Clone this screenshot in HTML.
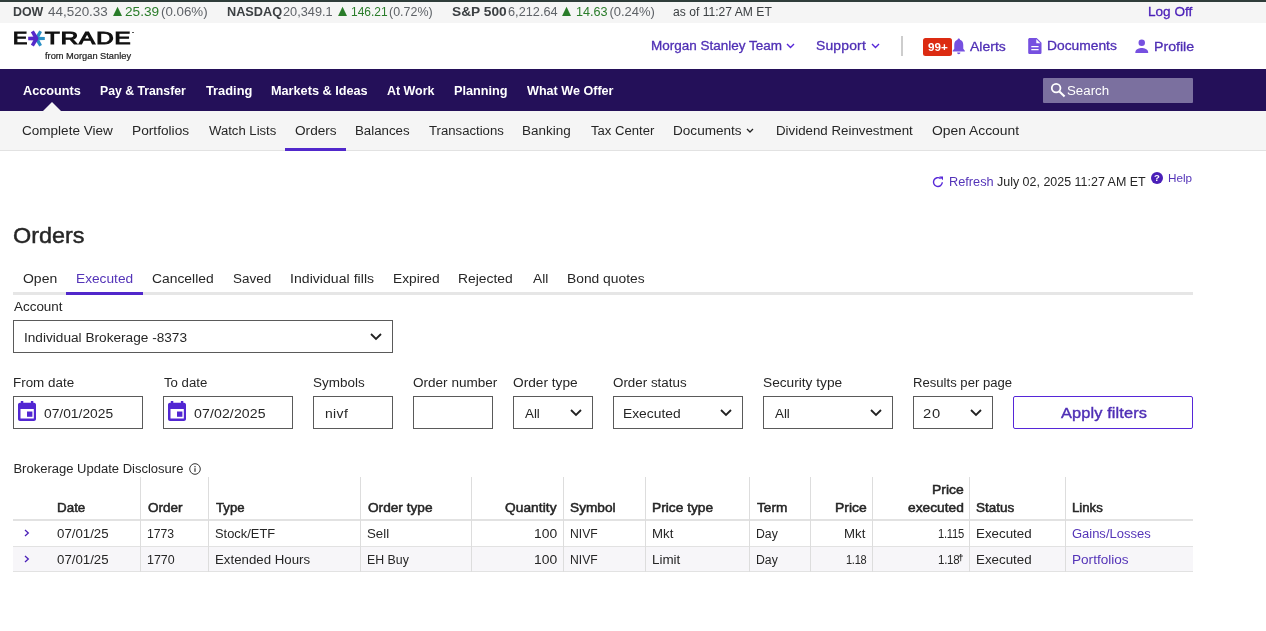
<!DOCTYPE html>
<html lang="en">
<head>
<meta charset="utf-8">
<title>E*TRADE - Orders</title>
<style>
html,body{margin:0;padding:0;}
body{width:1266px;height:631px;position:relative;overflow:hidden;background:#fff;will-change:transform;font-family:"Liberation Sans",sans-serif;}
.t{position:absolute;white-space:nowrap;line-height:20px;height:20px;transform-origin:0 50%;}
.b{position:absolute;box-sizing:border-box;}
.inp{position:absolute;box-sizing:border-box;border:1px solid #5a5a5a;background:#fff;border-radius:0;}
svg{position:absolute;overflow:visible;}
.vl{position:absolute;width:1px;background:#dddddd;top:477px;height:95px;}
</style>
</head>
<body>
<!-- top strip + ticker -->
<div class="b" style="left:0;top:0;width:1266px;height:23px;background:#f5f5f5;"></div>
<div class="b" style="left:0;top:0;width:1266px;height:2px;background:#2f3d3a;"></div>

<!-- logo -->
<svg style="left:27.55px;top:29.8px;" width="17" height="17" viewBox="-8.5 -8.5 17 17">
  <g fill="#2a90c6">
    <polygon points="0,-1.800 8.300,-1.500 8.300,1.500 0,1.800"/>
    <polygon points="0,-1.800 8.300,-1.500 8.300,1.500 0,1.800" transform="rotate(60)"/>
    <polygon points="0,-1.800 8.300,-1.500 8.300,1.500 0,1.800" transform="rotate(-60)"/>
  </g>
  <g fill="#5529c9">
    <polygon points="2.200,0 0,-2 -8.300,-1.700 -8.300,1.700 0,2"/>
    <polygon points="1,0 0,-2 -8.300,-1.700 -8.300,1.700 0,2" transform="rotate(60)"/>
    <polygon points="1,0 0,-2 -8.300,-1.700 -8.300,1.700 0,2" transform="rotate(-60)"/>
  </g>
</svg>

<div class="b" style="left:132.400px;top:31.600px;width:1.600px;height:1.600px;border-radius:50%;background:#444;"></div>
<!-- header icons -->
<svg style="left:786px;top:43px;" width="9" height="6" viewBox="0 0 9 6"><path d="M1 1 L4.5 4.5 L8 1" fill="none" stroke="#5627d8" stroke-width="1.4"/></svg>
<svg style="left:870.5px;top:43px;" width="9" height="6" viewBox="0 0 9 6"><path d="M1 1 L4.5 4.5 L8 1" fill="none" stroke="#5627d8" stroke-width="1.4"/></svg>
<div class="b" style="left:901.3px;top:36px;width:1.7px;height:20px;background:#cdcdcd;"></div>
<!-- bell -->
<svg style="left:951.500px;top:37.500px;" width="13.500" height="17" viewBox="0 0 15 18" preserveAspectRatio="none"><path fill="#7650e0" d="M7.5 0.5c0.9 0 1.4 0.6 1.4 1.4c2.4 0.7 3.6 2.7 3.6 5.3v4.3l1.8 1.9v0.9H0.7v-0.9l1.8-1.9V7.2c0-2.6 1.2-4.6 3.6-5.3C6.1 1.1 6.6 0.5 7.5 0.5z M5.7 15.3h3.6c0 1-0.8 1.8-1.8 1.8s-1.8-0.8-1.8-1.8z"/></svg>
<div class="b" style="left:923px;top:38px;width:29px;height:18px;background:#dc2b12;border-radius:2.500px;"></div>
<!-- document icon -->
<svg style="left:1028px;top:38px;" width="14" height="16" viewBox="0 0 14 16"><path fill="#7650e0" d="M1.8 0h6.9L13.5 4.8V14.4c0 0.9-0.7 1.6-1.6 1.6H1.8C0.9 16 0.2 15.300 0.200 14.400V1.600C0.200 0.700 0.900 0 1.800 0z"/><path fill="#fff" d="M8.300 1.200V5.300h4.100z M3.300 8h7.300v1.300H3.300z M3.300 11h7.300v1.300H3.300z"/></svg>
<!-- profile icon -->
<svg style="left:1135.300px;top:38.800px;" width="13.500" height="14.200" viewBox="0 0 14 15"><circle cx="7" cy="4" r="3.400" fill="#7650e0"/><path fill="#7650e0" d="M0.200 14.200c0-3.400 4.500-4.600 6.800-4.600s6.800 1.200 6.800 4.600v0.600H0.200z"/></svg>

<!-- nav -->
<div class="b" style="left:0;top:69px;width:1266px;height:42px;background:#241059;"></div>
<div class="b" style="left:1043px;top:78px;width:150px;height:25px;background:#7b709f;border-radius:1px;"></div>
<svg style="left:1049.500px;top:82px;" width="16" height="16" viewBox="0 0 17 17"><circle cx="6.500" cy="6.500" r="4.600" fill="none" stroke="#fff" stroke-width="1.900"/><path d="M10 10 L15.500 15.500" stroke="#fff" stroke-width="2.200" fill="none"/></svg>

<!-- subnav -->
<div class="b" style="left:0;top:111px;width:1266px;height:40px;background:#f5f5f5;border-bottom:1px solid #e2e2e2;"></div>
<svg style="left:42.500px;top:102px;" width="18" height="9" viewBox="0 0 18 9"><polygon points="0,9 9,0 18,9" fill="#f5f5f5"/></svg>
<div class="b" style="left:285px;top:147.800px;width:61px;height:3.200px;background:#5128cb;"></div>
<svg style="left:745.800px;top:128.200px;" width="8" height="6" viewBox="0 0 8 6"><path d="M1 1 L4 4 L7 1" fill="none" stroke="#222" stroke-width="1.300"/></svg>

<!-- refresh/help -->
<svg style="left:931.500px;top:176px;" width="12" height="12" viewBox="0 0 12 12"><path d="M10.300 6.200A4.400 4.400 0 1 1 8.600 2.600" fill="none" stroke="#5627d8" stroke-width="1.400"/><polygon points="7.200,0.400 11,0.400 11,4.200" fill="#5627d8"/></svg>
<svg style="left:1151px;top:171.500px;" width="12" height="12" viewBox="0 0 12 12"><circle cx="6" cy="6" r="6" fill="#4a1fb8"/><text x="6" y="9.300" text-anchor="middle" font-family="Liberation Sans, sans-serif" font-size="9.500" font-weight="700" fill="#fff">?</text></svg>

<!-- tabs -->
<div class="b" style="left:13px;top:292px;width:1180px;height:3px;background:#e6e6e6;"></div>
<div class="b" style="left:66px;top:292px;width:77px;height:3px;background:#5128cb;"></div>

<!-- account select -->
<div class="inp" style="left:13px;top:320px;width:380px;height:33px;"></div>
<svg class="chev" style="left:370px;top:333px;" width="12" height="8" viewBox="0 0 12 8"><path d="M1 1 L6 6 L11 1" fill="none" stroke="#222" stroke-width="1.800"/></svg>

<!-- filter inputs -->
<div class="inp" style="left:13px;top:396px;width:130px;height:33px;"></div>
<div class="inp" style="left:163px;top:396px;width:130px;height:33px;"></div>
<div class="inp" style="left:313px;top:396px;width:80px;height:33px;"></div>
<div class="inp" style="left:413px;top:396px;width:80px;height:33px;"></div>
<div class="inp" style="left:513px;top:396px;width:80px;height:33px;"></div>
<div class="inp" style="left:613px;top:396px;width:130px;height:33px;"></div>
<div class="inp" style="left:763px;top:396px;width:130px;height:33px;"></div>
<div class="inp" style="left:913px;top:396px;width:80px;height:33px;"></div>
<div class="inp" style="left:1013px;top:396px;width:180px;height:33px;border-color:#5627d8;border-radius:2px;"></div>
<svg style="left:570px;top:409px;" width="12" height="8" viewBox="0 0 12 8"><path d="M1 1 L6 6 L11 1" fill="none" stroke="#222" stroke-width="1.800"/></svg>
<svg style="left:719.500px;top:409px;" width="12" height="8" viewBox="0 0 12 8"><path d="M1 1 L6 6 L11 1" fill="none" stroke="#222" stroke-width="1.800"/></svg>
<svg style="left:870px;top:409px;" width="12" height="8" viewBox="0 0 12 8"><path d="M1 1 L6 6 L11 1" fill="none" stroke="#222" stroke-width="1.800"/></svg>
<svg style="left:970px;top:409px;" width="12" height="8" viewBox="0 0 12 8"><path d="M1 1 L6 6 L11 1" fill="none" stroke="#222" stroke-width="1.800"/></svg>
<!-- calendar icons -->
<svg style="left:18px;top:401px;" width="18" height="20" viewBox="0 0 18 20"><path fill="#5227d2" d="M2.800 0h2.500v1.700h7.600V0h2.400v1.700h0.700c1.100 0 2 0.900 2 2V18c0 1.100-0.900 2-2 2H2c-1.100 0-2-0.900-2-2V3.700c0-1.100 0.900-2 2-2h0.800z M2.500 8v9.500H15.800V8z"/><rect x="9" y="10.500" width="5.400" height="5.300" fill="#5227d2"/></svg>
<svg style="left:168px;top:401px;" width="18" height="20" viewBox="0 0 18 20"><path fill="#5227d2" d="M2.800 0h2.500v1.700h7.600V0h2.400v1.700h0.700c1.100 0 2 0.900 2 2V18c0 1.100-0.900 2-2 2H2c-1.100 0-2-0.900-2-2V3.700c0-1.100 0.900-2 2-2h0.800z M2.500 8v9.500H15.800V8z"/><rect x="9" y="10.500" width="5.400" height="5.300" fill="#5227d2"/></svg>

<!-- info icon -->
<svg style="left:188.500px;top:462.500px;" width="12" height="12" viewBox="0 0 12 12"><circle cx="6" cy="6" r="5.300" fill="none" stroke="#333" stroke-width="1"/><rect x="5.400" y="5.200" width="1.200" height="3.600" fill="#333"/><rect x="5.400" y="3" width="1.200" height="1.300" fill="#333"/></svg>

<!-- table -->
<div class="b" style="left:13px;top:547px;width:1180px;height:25px;background:#f7f6f9;"></div>
<div class="b" style="left:13px;top:519px;width:1180px;height:2px;background:#e2e2e2;"></div>
<div class="b" style="left:13px;top:546px;width:1180px;height:1px;background:#e2e2e2;"></div>
<div class="b" style="left:13px;top:571px;width:1180px;height:1px;background:#e2e2e2;"></div>
<div class="vl" style="left:140px;"></div>
<div class="vl" style="left:208px;"></div>
<div class="vl" style="left:360px;"></div>
<div class="vl" style="left:471px;"></div>
<div class="vl" style="left:563px;"></div>
<div class="vl" style="left:645px;"></div>
<div class="vl" style="left:749px;"></div>
<div class="vl" style="left:810px;"></div>
<div class="vl" style="left:872px;"></div>
<div class="vl" style="left:969px;"></div>
<div class="vl" style="left:1065px;"></div>
<svg style="left:24px;top:529px;" width="6" height="8" viewBox="0 0 6 8"><path d="M1 1 L4.300 4 L1 7" fill="none" stroke="#4a1fb8" stroke-width="1.300"/></svg>
<svg style="left:24px;top:555px;" width="6" height="8" viewBox="0 0 6 8"><path d="M1 1 L4.300 4 L1 7" fill="none" stroke="#4a1fb8" stroke-width="1.300"/></svg>

<span class="t" style="left:12.88px;top:1.68px;font-size:13.02px;font-weight:700;color:#3c4043;letter-spacing:0.000px;transform:scaleX(0.9530);">DOW</span>
<span class="t" style="left:48.18px;top:2.28px;font-size:13.02px;font-weight:400;color:#5f6368;letter-spacing:0.000px;transform:scaleX(1.0327);">44,520.33</span>
<span class="t" style="left:109.82px;top:1.25px;font-size:16px;font-weight:400;color:#2a7d2a;letter-spacing:-0.300px;transform:scaleX(0.9526);">▲</span>
<span class="t" style="left:125.38px;top:2.28px;font-size:13.02px;font-weight:400;color:#2a7d2a;letter-spacing:0.000px;transform:scaleX(1.0481);">25.39</span>
<span class="t" style="left:161.38px;top:2.28px;font-size:13.02px;font-weight:400;color:#5f6368;letter-spacing:0.000px;transform:scaleX(1.0231);">(0.06%)</span>
<span class="t" style="left:226.88px;top:2.28px;font-size:13.02px;font-weight:700;color:#3c4043;letter-spacing:0.000px;transform:scaleX(0.9773);">NASDAQ</span>
<span class="t" style="left:283.38px;top:2.28px;font-size:13.02px;font-weight:400;color:#5f6368;letter-spacing:0.000px;transform:scaleX(0.9795);">20,349.1</span>
<span class="t" style="left:334.90px;top:1.25px;font-size:16px;font-weight:400;color:#2a7d2a;letter-spacing:-0.300px;transform:scaleX(0.9526);">▲</span>
<span class="t" style="left:350.88px;top:2.28px;font-size:13.02px;font-weight:400;color:#2a7d2a;letter-spacing:-0.007px;transform:scaleX(0.9212);">146.21</span>
<span class="t" style="left:389.38px;top:2.28px;font-size:13.02px;font-weight:400;color:#5f6368;letter-spacing:0.000px;transform:scaleX(0.9574);">(0.72%)</span>
<span class="t" style="left:451.88px;top:1.78px;font-size:13.02px;font-weight:700;color:#3c4043;letter-spacing:0.000px;transform:scaleX(1.0534);">S&amp;P 500</span>
<span class="t" style="left:508.38px;top:2.28px;font-size:13.02px;font-weight:400;color:#5f6368;letter-spacing:0.000px;transform:scaleX(0.9795);">6,212.64</span>
<span class="t" style="left:559.44px;top:1.25px;font-size:16px;font-weight:400;color:#2a7d2a;letter-spacing:-0.300px;transform:scaleX(0.9526);">▲</span>
<span class="t" style="left:575.88px;top:2.28px;font-size:13.02px;font-weight:400;color:#2a7d2a;letter-spacing:0.000px;transform:scaleX(0.9715);">14.63</span>
<span class="t" style="left:609.38px;top:2.28px;font-size:13.02px;font-weight:400;color:#5f6368;letter-spacing:0.000px;">(0.24%)</span>
<span class="t" style="left:673.38px;top:2.28px;font-size:13.02px;font-weight:400;color:#3c4043;letter-spacing:0.000px;transform:scaleX(0.9311);">as of 11:27 AM ET</span>
<span class="t" style="left:1148.38px;top:2.28px;font-size:13.02px;font-weight:400;color:#4a1fb8;letter-spacing:0.000px;transform:scaleX(1.0434);-webkit-text-stroke:0.3px #4a1fb8;">Log Off</span>
<span class="t" style="left:12.84px;top:28.40px;font-size:16.3px;font-weight:400;color:#111;letter-spacing:0.700px;transform:scaleX(1.3149);-webkit-text-stroke:1px #111;">E</span>
<span class="t" style="left:45.22px;top:28.47px;font-size:16.3px;font-weight:400;color:#111;letter-spacing:0.700px;transform:scaleX(1.4751);-webkit-text-stroke:1px #111;">TRADE</span>
<span class="t" style="left:44.68px;top:45.67px;font-size:9px;font-weight:400;color:#222;letter-spacing:0.000px;transform:scaleX(1.0299);-webkit-text-stroke:0.2px #222;">from Morgan Stanley</span>
<span class="t" style="left:651.38px;top:36.39px;font-size:13.02px;font-weight:400;color:#4f2fb5;letter-spacing:0.000px;transform:scaleX(1.0375);-webkit-text-stroke:0.3px #4f2fb5;">Morgan Stanley Team</span>
<span class="t" style="left:816.38px;top:36.39px;font-size:13.02px;font-weight:400;color:#4f2fb5;letter-spacing:0.158px;transform:scaleX(1.0700);-webkit-text-stroke:0.3px #4f2fb5;">Support</span>
<span class="t" style="left:928.18px;top:36.58px;font-size:11px;font-weight:700;color:#fff;letter-spacing:0.000px;transform:scaleX(1.0604);">99+</span>
<span class="t" style="left:969.68px;top:36.81px;font-size:13.02px;font-weight:400;color:#4f2fb5;letter-spacing:0.035px;transform:scaleX(1.0700);-webkit-text-stroke:0.3px #4f2fb5;">Alerts</span>
<span class="t" style="left:1047.38px;top:36.39px;font-size:13.02px;font-weight:400;color:#4f2fb5;letter-spacing:0.000px;transform:scaleX(1.0603);-webkit-text-stroke:0.3px #4f2fb5;">Documents</span>
<span class="t" style="left:1153.88px;top:36.81px;font-size:13.02px;font-weight:400;color:#4f2fb5;letter-spacing:0.000px;transform:scaleX(1.0876);-webkit-text-stroke:0.3px #4f2fb5;">Profile</span>
<span class="t" style="left:23.18px;top:80.72px;font-size:13.02px;font-weight:700;color:#fff;letter-spacing:0.000px;transform:scaleX(0.9745);">Accounts</span>
<span class="t" style="left:99.88px;top:81.42px;font-size:13.02px;font-weight:700;color:#fff;letter-spacing:0.000px;transform:scaleX(0.9412);">Pay &amp; Transfer</span>
<span class="t" style="left:206.18px;top:81.44px;font-size:13.02px;font-weight:700;color:#fff;letter-spacing:0.000px;transform:scaleX(0.9850);">Trading</span>
<span class="t" style="left:270.88px;top:81.42px;font-size:13.02px;font-weight:700;color:#fff;letter-spacing:0.000px;transform:scaleX(0.9747);">Markets &amp; Ideas</span>
<span class="t" style="left:387.18px;top:80.67px;font-size:13.02px;font-weight:700;color:#fff;letter-spacing:0.000px;transform:scaleX(0.9566);">At Work</span>
<span class="t" style="left:453.88px;top:81.39px;font-size:13.02px;font-weight:700;color:#fff;letter-spacing:0.000px;transform:scaleX(0.9756);">Planning</span>
<span class="t" style="left:527.18px;top:80.74px;font-size:13.02px;font-weight:700;color:#fff;letter-spacing:0.000px;transform:scaleX(0.9672);">What We Offer</span>
<span class="t" style="left:1067.38px;top:81.39px;font-size:13.02px;font-weight:400;color:#fff;letter-spacing:0.000px;transform:scaleX(1.0221);">Search</span>
<span class="t" style="left:22.38px;top:121.28px;font-size:13.02px;font-weight:400;color:#262626;letter-spacing:0.000px;transform:scaleX(1.0401);">Complete View</span>
<span class="t" style="left:132.38px;top:121.28px;font-size:13.02px;font-weight:400;color:#262626;letter-spacing:0.000px;transform:scaleX(1.0527);">Portfolios</span>
<span class="t" style="left:209.18px;top:121.28px;font-size:13.02px;font-weight:400;color:#262626;letter-spacing:0.000px;transform:scaleX(1.0079);">Watch Lists</span>
<span class="t" style="left:295.38px;top:121.28px;font-size:13.02px;font-weight:400;color:#262626;letter-spacing:-0.000px;transform:scaleX(1.0466);">Orders</span>
<span class="t" style="left:355.38px;top:121.28px;font-size:13.02px;font-weight:400;color:#262626;letter-spacing:-0.000px;transform:scaleX(1.0202);">Balances</span>
<span class="t" style="left:429.18px;top:121.28px;font-size:13.02px;font-weight:400;color:#262626;letter-spacing:0.000px;transform:scaleX(1.0104);">Transactions</span>
<span class="t" style="left:522.38px;top:121.28px;font-size:13.02px;font-weight:400;color:#262626;letter-spacing:0.000px;transform:scaleX(1.0337);">Banking</span>
<span class="t" style="left:590.68px;top:121.28px;font-size:13.02px;font-weight:400;color:#262626;letter-spacing:-0.000px;transform:scaleX(1.0059);">Tax Center</span>
<span class="t" style="left:673.38px;top:121.28px;font-size:13.02px;font-weight:400;color:#262626;letter-spacing:0.000px;transform:scaleX(1.0424);">Documents</span>
<span class="t" style="left:775.88px;top:121.28px;font-size:13.02px;font-weight:400;color:#262626;letter-spacing:0.000px;transform:scaleX(1.0221);">Dividend Reinvestment</span>
<span class="t" style="left:932.38px;top:121.28px;font-size:13.02px;font-weight:400;color:#262626;letter-spacing:-0.000px;transform:scaleX(1.0652);">Open Account</span>
<span class="t" style="left:949.38px;top:171.65px;font-size:13.02px;font-weight:400;color:#5434b8;letter-spacing:0.000px;transform:scaleX(0.9793);">Refresh</span>
<span class="t" style="left:996.88px;top:171.65px;font-size:13.02px;font-weight:400;color:#262626;letter-spacing:0.000px;transform:scaleX(0.9570);">July 02, 2025 11:27 AM ET</span>
<span class="t" style="left:1167.92px;top:167.91px;font-size:11.2px;font-weight:400;color:#5434b8;letter-spacing:0.000px;transform:scaleX(1.0482);">Help</span>
<span class="t" style="left:12.88px;top:226.25px;font-size:21.8px;font-weight:400;color:#262626;letter-spacing:0.000px;transform:scaleX(1.0745);-webkit-text-stroke:0.45px #262626;">Orders</span>
<span class="t" style="left:22.88px;top:268.86px;font-size:13.02px;font-weight:400;color:#262626;letter-spacing:-0.000px;transform:scaleX(1.0733);">Open</span>
<span class="t" style="left:75.88px;top:268.86px;font-size:13.02px;font-weight:400;color:#5434b8;letter-spacing:0.000px;transform:scaleX(1.0527);">Executed</span>
<span class="t" style="left:152.38px;top:268.86px;font-size:13.02px;font-weight:400;color:#262626;letter-spacing:0.000px;transform:scaleX(1.0645);">Cancelled</span>
<span class="t" style="left:232.88px;top:268.86px;font-size:13.02px;font-weight:400;color:#262626;letter-spacing:0.000px;transform:scaleX(1.0342);">Saved</span>
<span class="t" style="left:289.88px;top:268.86px;font-size:13.02px;font-weight:400;color:#262626;letter-spacing:0.029px;transform:scaleX(1.0805);">Individual fills</span>
<span class="t" style="left:392.88px;top:268.86px;font-size:13.02px;font-weight:400;color:#262626;letter-spacing:0.000px;transform:scaleX(1.0565);">Expired</span>
<span class="t" style="left:458.38px;top:268.86px;font-size:13.02px;font-weight:400;color:#262626;letter-spacing:0.000px;transform:scaleX(1.0633);">Rejected</span>
<span class="t" style="left:533.18px;top:268.86px;font-size:13.02px;font-weight:400;color:#262626;letter-spacing:0.000px;transform:scaleX(1.0599);">All</span>
<span class="t" style="left:567.38px;top:268.86px;font-size:13.02px;font-weight:400;color:#262626;letter-spacing:0.000px;transform:scaleX(1.0619);">Bond quotes</span>
<span class="t" style="left:14.18px;top:297.02px;font-size:13.02px;font-weight:400;color:#262626;letter-spacing:0.000px;transform:scaleX(1.0320);">Account</span>
<span class="t" style="left:23.92px;top:328.23px;font-size:13.02px;font-weight:400;color:#262626;letter-spacing:0.000px;transform:scaleX(1.0479);">Individual Brokerage -8373</span>
<span class="t" style="left:12.88px;top:373.02px;font-size:13.02px;font-weight:400;color:#262626;letter-spacing:0.000px;transform:scaleX(1.0303);">From date</span>
<span class="t" style="left:163.68px;top:373.02px;font-size:13.02px;font-weight:400;color:#262626;letter-spacing:0.000px;transform:scaleX(1.0142);">To date</span>
<span class="t" style="left:312.88px;top:373.02px;font-size:13.02px;font-weight:400;color:#262626;letter-spacing:0.000px;transform:scaleX(1.0342);">Symbols</span>
<span class="t" style="left:412.88px;top:373.02px;font-size:13.02px;font-weight:400;color:#262626;letter-spacing:0.000px;transform:scaleX(1.0404);">Order number</span>
<span class="t" style="left:512.88px;top:373.02px;font-size:13.02px;font-weight:400;color:#262626;letter-spacing:0.000px;transform:scaleX(1.0508);">Order type</span>
<span class="t" style="left:612.88px;top:373.02px;font-size:13.02px;font-weight:400;color:#262626;letter-spacing:0.000px;transform:scaleX(1.0279);">Order status</span>
<span class="t" style="left:762.88px;top:373.02px;font-size:13.02px;font-weight:400;color:#262626;letter-spacing:0.000px;transform:scaleX(1.0516);">Security type</span>
<span class="t" style="left:912.88px;top:373.02px;font-size:13.02px;font-weight:400;color:#262626;letter-spacing:0.000px;transform:scaleX(1.0072);">Results per page</span>
<span class="t" style="left:43.88px;top:404.28px;font-size:13.02px;font-weight:400;color:#262626;letter-spacing:0.000px;transform:scaleX(1.0609);">07/01/2025</span>
<span class="t" style="left:193.88px;top:404.28px;font-size:13.02px;font-weight:400;color:#262626;letter-spacing:0.112px;transform:scaleX(1.0824);">07/02/2025</span>
<span class="t" style="left:325.38px;top:404.43px;font-size:13.02px;font-weight:400;color:#262626;letter-spacing:0.348px;transform:scaleX(1.0700);">nivf</span>
<span class="t" style="left:524.68px;top:404.28px;font-size:13.02px;font-weight:400;color:#262626;letter-spacing:0.000px;transform:scaleX(1.0229);">All</span>
<span class="t" style="left:623.38px;top:404.28px;font-size:13.02px;font-weight:400;color:#262626;letter-spacing:0.000px;transform:scaleX(1.0616);">Executed</span>
<span class="t" style="left:774.68px;top:404.28px;font-size:13.02px;font-weight:400;color:#262626;letter-spacing:0.000px;transform:scaleX(1.0229);">All</span>
<span class="t" style="left:923.38px;top:404.28px;font-size:13.02px;font-weight:400;color:#262626;letter-spacing:0.700px;transform:scaleX(1.1326);">20</span>
<span class="t" style="left:1060.68px;top:403.45px;font-size:15.4px;font-weight:400;color:#4f2fb5;letter-spacing:0.100px;transform:scaleX(1.0641);-webkit-text-stroke:0.4px #4f2fb5;">Apply filters</span>
<span class="t" style="left:13.38px;top:459.02px;font-size:13.02px;font-weight:400;color:#262626;letter-spacing:0.000px;">Brokerage Update Disclosure</span>
<span class="t" style="left:56.88px;top:498.02px;font-size:13.02px;font-weight:400;color:#262626;letter-spacing:0.000px;transform:scaleX(1.0297);-webkit-text-stroke:0.5px #262626;">Date</span>
<span class="t" style="left:147.68px;top:498.02px;font-size:13.02px;font-weight:400;color:#262626;letter-spacing:0.000px;transform:scaleX(1.0368);-webkit-text-stroke:0.5px #262626;">Order</span>
<span class="t" style="left:216.18px;top:498.02px;font-size:13.02px;font-weight:400;color:#262626;letter-spacing:0.000px;transform:scaleX(1.0102);-webkit-text-stroke:0.5px #262626;">Type</span>
<span class="t" style="left:367.68px;top:498.02px;font-size:13.02px;font-weight:400;color:#262626;letter-spacing:0.000px;transform:scaleX(1.0488);-webkit-text-stroke:0.5px #262626;">Order type</span>
<span class="t" style="left:505.18px;top:498.02px;font-size:13.02px;font-weight:400;color:#262626;letter-spacing:0.056px;transform:scaleX(1.0537);-webkit-text-stroke:0.5px #262626;">Quantity</span>
<span class="t" style="left:569.88px;top:498.02px;font-size:13.02px;font-weight:400;color:#262626;letter-spacing:0.000px;transform:scaleX(1.0513);-webkit-text-stroke:0.5px #262626;">Symbol</span>
<span class="t" style="left:652.38px;top:498.02px;font-size:13.02px;font-weight:400;color:#262626;letter-spacing:0.000px;transform:scaleX(1.0561);-webkit-text-stroke:0.5px #262626;">Price type</span>
<span class="t" style="left:756.68px;top:498.02px;font-size:13.02px;font-weight:400;color:#262626;letter-spacing:0.000px;transform:scaleX(1.0477);-webkit-text-stroke:0.5px #262626;">Term</span>
<span class="t" style="left:834.88px;top:498.02px;font-size:13.02px;font-weight:400;color:#262626;letter-spacing:-0.000px;transform:scaleX(1.0672);-webkit-text-stroke:0.5px #262626;">Price</span>
<span class="t" style="left:908.18px;top:498.02px;font-size:13.02px;font-weight:400;color:#262626;letter-spacing:0.000px;transform:scaleX(1.0563);-webkit-text-stroke:0.5px #262626;">executed</span>
<span class="t" style="left:975.88px;top:498.02px;font-size:13.02px;font-weight:400;color:#262626;letter-spacing:0.000px;transform:scaleX(1.0381);-webkit-text-stroke:0.5px #262626;">Status</span>
<span class="t" style="left:1071.88px;top:498.02px;font-size:13.02px;font-weight:400;color:#262626;letter-spacing:0.000px;transform:scaleX(1.0135);-webkit-text-stroke:0.5px #262626;">Links</span>
<span class="t" style="left:932.34px;top:480.28px;font-size:13.02px;font-weight:400;color:#262626;letter-spacing:0.000px;transform:scaleX(1.0693);-webkit-text-stroke:0.5px #262626;">Price</span>
<span class="t" style="left:56.88px;top:524.02px;font-size:13.02px;font-weight:400;color:#262626;letter-spacing:0.000px;transform:scaleX(1.0189);">07/01/25</span>
<span class="t" style="left:146.88px;top:524.02px;font-size:13.02px;font-weight:400;color:#262626;letter-spacing:0.000px;transform:scaleX(0.9375);">1773</span>
<span class="t" style="left:215.38px;top:524.02px;font-size:13.02px;font-weight:400;color:#262626;letter-spacing:0.000px;transform:scaleX(0.9895);">Stock/ETF</span>
<span class="t" style="left:366.88px;top:524.02px;font-size:13.02px;font-weight:400;color:#262626;letter-spacing:0.000px;transform:scaleX(1.0209);">Sell</span>
<span class="t" style="left:534.38px;top:524.02px;font-size:13.02px;font-weight:400;color:#262626;letter-spacing:-0.000px;transform:scaleX(1.0668);">100</span>
<span class="t" style="left:569.88px;top:524.32px;font-size:13.02px;font-weight:400;color:#262626;letter-spacing:0.000px;transform:scaleX(0.9326);">NIVF</span>
<span class="t" style="left:652.38px;top:524.02px;font-size:13.02px;font-weight:400;color:#262626;letter-spacing:0.000px;transform:scaleX(1.0170);">Mkt</span>
<span class="t" style="left:755.88px;top:524.02px;font-size:13.02px;font-weight:400;color:#262626;letter-spacing:0.000px;transform:scaleX(0.9414);">Day</span>
<span class="t" style="left:844.38px;top:524.02px;font-size:13.02px;font-weight:400;color:#262626;letter-spacing:0.000px;transform:scaleX(1.0170);">Mkt</span>
<span class="t" style="left:937.88px;top:524.02px;font-size:13.02px;font-weight:400;color:#262626;letter-spacing:-0.300px;transform:scaleX(0.8603);">1.115</span>
<span class="t" style="left:975.88px;top:524.02px;font-size:13.02px;font-weight:400;color:#262626;letter-spacing:0.000px;transform:scaleX(1.0248);">Executed</span>
<span class="t" style="left:56.88px;top:549.65px;font-size:13.02px;font-weight:400;color:#262626;letter-spacing:0.000px;transform:scaleX(1.0189);">07/01/25</span>
<span class="t" style="left:146.88px;top:549.65px;font-size:13.02px;font-weight:400;color:#262626;letter-spacing:0.000px;transform:scaleX(0.9547);">1770</span>
<span class="t" style="left:215.38px;top:549.65px;font-size:13.02px;font-weight:400;color:#262626;letter-spacing:0.000px;transform:scaleX(1.0190);">Extended Hours</span>
<span class="t" style="left:366.88px;top:549.65px;font-size:13.02px;font-weight:400;color:#262626;letter-spacing:0.000px;transform:scaleX(0.9473);">EH Buy</span>
<span class="t" style="left:534.38px;top:549.65px;font-size:13.02px;font-weight:400;color:#262626;letter-spacing:-0.000px;transform:scaleX(1.0668);">100</span>
<span class="t" style="left:569.88px;top:549.95px;font-size:13.02px;font-weight:400;color:#262626;letter-spacing:0.000px;transform:scaleX(0.9326);">NIVF</span>
<span class="t" style="left:652.38px;top:549.65px;font-size:13.02px;font-weight:400;color:#262626;letter-spacing:0.000px;transform:scaleX(1.0303);">Limit</span>
<span class="t" style="left:755.88px;top:549.65px;font-size:13.02px;font-weight:400;color:#262626;letter-spacing:0.000px;transform:scaleX(0.9414);">Day</span>
<span class="t" style="left:845.88px;top:549.65px;font-size:13.02px;font-weight:400;color:#262626;letter-spacing:-0.300px;transform:scaleX(0.8460);">1.18</span>
<span class="t" style="left:937.88px;top:549.65px;font-size:13.02px;font-weight:400;color:#262626;letter-spacing:-0.300px;transform:scaleX(0.8868);">1.18</span>
<span class="t" style="left:975.88px;top:549.65px;font-size:13.02px;font-weight:400;color:#262626;letter-spacing:0.000px;transform:scaleX(1.0248);">Executed</span>
<span class="t" style="left:958.00px;top:548.31px;font-size:9.5px;font-weight:700;color:#262626;letter-spacing:-0.000px;transform:scaleX(1.0383);">†</span>
<span class="t" style="left:1071.88px;top:524.02px;font-size:13.02px;font-weight:400;color:#5434b8;letter-spacing:0.000px;">Gains/Losses</span>
<span class="t" style="left:1071.88px;top:549.65px;font-size:13.02px;font-weight:400;color:#5434b8;letter-spacing:0.000px;transform:scaleX(1.0435);">Portfolios</span>
</body>
</html>
